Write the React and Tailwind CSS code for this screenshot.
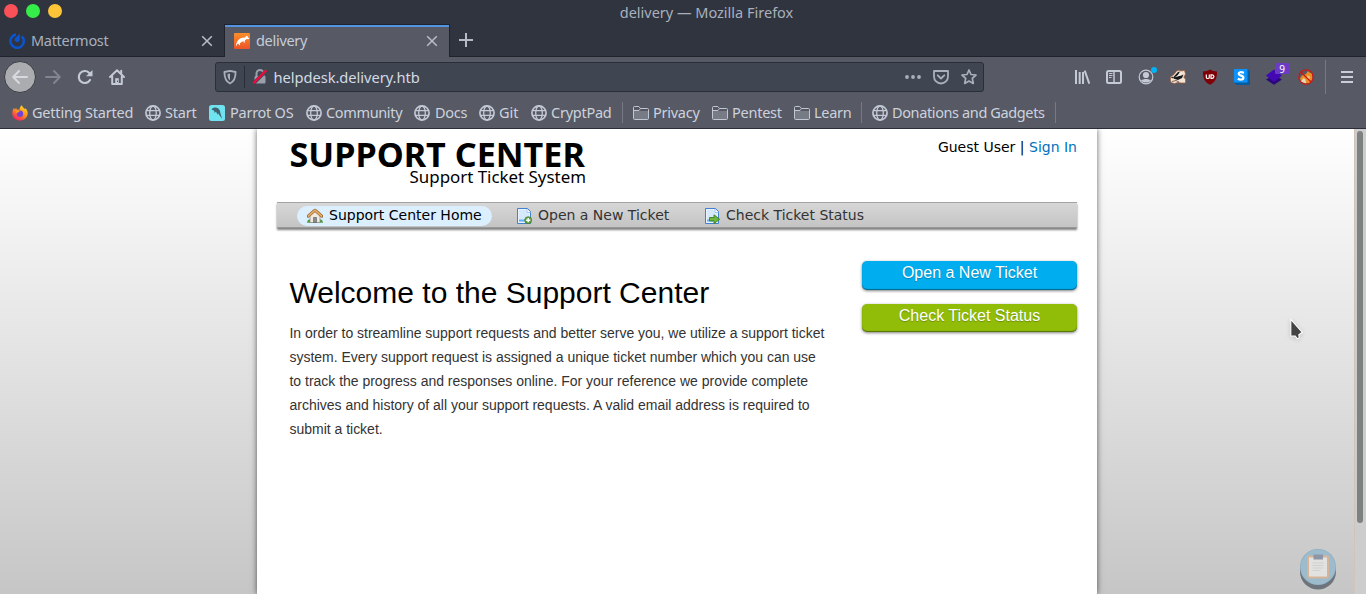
import React from "react";

const ui = "font-['Noto_Sans',sans-serif] whitespace-nowrap";

function Globe() {
  return (
    <svg width="16" height="16" viewBox="0 0 16 16" fill="none" stroke="#c3c9d5" className="shrink-0">
      <circle cx="8" cy="8" r="7.1" strokeWidth="1.7" />
      <ellipse cx="8" cy="8" rx="3.3" ry="7" strokeWidth="1.3" />
      <path d="M1.5 5.6h13M1.5 10.4h13" strokeWidth="1.3" />
    </svg>
  );
}

function Folder() {
  return (
    <svg width="16" height="16" viewBox="0 0 16 16" className="shrink-0">
      <path d="M.5 13.5v-11q0-1 1-1h4.3l1.7 2h7q1 0 1 1v9q0 1-1 1h-13q-1 0-1-1z" fill="#555762" stroke="#c0c6d2" />
      <path d="M1 6h14v8H1z" fill="#777b86" />
      <path d="M.5 5.5H6L7.5 3.5" stroke="#c0c6d2" fill="none" />
    </svg>
  );
}

function Firefox() {
  return (
    <svg width="16" height="16" viewBox="0 0 16 16" className="shrink-0">
      <defs>
        <linearGradient id="ff" x1=".8" y1="0" x2=".2" y2="1">
          <stop offset="0" stopColor="#ffe226" />
          <stop offset=".5" stopColor="#ff8a1c" />
          <stop offset="1" stopColor="#f5156c" />
        </linearGradient>
      </defs>
      <path d="M8 15.5C3.5 15.5.3 12.4.3 8.4.3 6 1.2 4 2 2.8l.6 1.6L4.2 3l.6 1.4 2.7.3C7.600 2.500 8.500 1 10 .2c.2 2 2 2.500 3 4l.6-1c1.400 1.500 2.100 3.300 2.100 5 0 4-3.300 7.300-7.700 7.300z" fill="url(#ff)" />
      <circle cx="8" cy="8.700" r="3.200" fill="#7541d6" />
      <path d="M3.500 6.500c1.600-1.200 3-.6 4.500.2-1.500 0-2 1-3.500 1.200z" fill="#ff9a1c" />
    </svg>
  );
}

function Parrot() {
  return (
    <svg width="16" height="16" viewBox="0 0 16 16" className="shrink-0">
      <rect width="16" height="16" rx="2.500" fill="#6fe3ef" />
      <path d="M2.500 4.500C4 2.500 7 2 9 3.300c2 1.300 2.200 3.500 2.500 5.400l1.700 5-2.600-3.200L9 8.200l-.5 1.600L7 6.600 5.500 8l-.3-2.300z" fill="#40616d" />
    </svg>
  );
}

const bookmarks = [
  { t: "Getting Started", w: "w-[133px]", i: <Firefox />, k: "tracking-[-0.2px]" },
  { t: "Start", w: "w-[64px]", i: <Globe />, k: "tracking-[-0.2px]" },
  { t: "Parrot OS", w: "w-[97px]", i: <Parrot />, g: "gap-[5px]", k: "tracking-[-0.25px]" },
  { t: "Community", w: "w-[108px]", i: <Globe />, k: "tracking-[-0.35px]" },
  { t: "Docs", w: "w-[65px]", i: <Globe />, g: "gap-[5px]", k: "tracking-[-0.25px]" },
  { t: "Git", w: "w-[52px]", i: <Globe />, k: "tracking-[0px]" },
  { t: "CryptPad", w: "w-[91px]", i: <Globe />, k: "tracking-[-0.25px]" },
  null,
  { t: "Privacy", w: "w-[79px]", i: <Folder />, k: "tracking-[-0.25px]" },
  { t: "Pentest", w: "w-[82px]", i: <Folder />, k: "tracking-[-0.25px]" },
  { t: "Learn", w: "w-[67px]", i: <Folder />, k: "tracking-[-0.3px]" },
  null,
  { t: "Donations and Gadgets", w: "w-[183px]", i: <Globe />, k: "tracking-[-0.38px]" },
  null,
];

function Close() {
  return (
    <svg width="12" height="12" viewBox="0 0 12 12" stroke="#b4bbc7" strokeWidth="1.600" className="shrink-0">
      <path d="M1.200 1.200l9.600 9.600M10.800 1.200l-9.600 9.600" />
    </svg>
  );
}

function TabStrip() {
  return (
    <div className="flex h-[33px] bg-[#2f343f]">
      <div className="flex h-[33px] w-[224px] items-center border-b border-[#20232b] pl-[9px] pr-[11px] pt-px">
        <svg width="16" height="16" viewBox="0 0 16 16" fill="none" className="shrink-0">
          <path d="M7 1.500A6.700 6.700 0 1 0 12.800 3.300" stroke="#0a55cf" strokeWidth="2.500" />
          <path d="M10.800.7v6.300a2.600 2.600 0 1 1-4.700-2z" fill="#0a55cf" />
        </svg>
        <span className={`${ui} ml-[6px] mt-px grow text-[14.5px] tracking-[-0.3px] text-[#a9b0bc]`}>Mattermost</span>
        <Close />
      </div>
      <div className="flex h-[33px] w-[226px] flex-col border-x border-[#20232b] bg-[#575965]">
        <div className="h-px bg-[#20232b]" />
        <div className="h-[2px] bg-[#5294e2]" />
        <div className="flex h-[28px] items-center pl-[9px] pr-[11px]">
          <svg width="16" height="16" viewBox="0 0 16 16" className="shrink-0">
            <defs>
              <linearGradient id="kg" x1="0" y1="0" x2="0" y2="1">
                <stop offset="0" stopColor="#fa8f2a" />
                <stop offset="1" stopColor="#ee5327" />
              </linearGradient>
            </defs>
            <rect width="16" height="16" rx="1" fill="url(#kg)" />
            <path d="M1.800 13.800C2 9.500 4.500 5.300 8.500 4.800l2.500-.3 1.300-1.700.9.600.9-.5v1.700l1.200 1-.8.600-1.800-.2-1.800 1.400-.4 2.600-.8-.4-.1-1.600-1.500.7-2.400 1.500.5 1.600-1 .5-1-1.700-.9.500z" fill="#fff" />
          </svg>
          <span className={`${ui} ml-[6px] grow text-[14.5px] tracking-[-0.3px] text-[#c6cdd8]`}>delivery</span>
          <Close />
        </div>
      </div>
      <div className="flex grow items-center border-b border-[#20232b] pl-[8px]">
        <svg width="16" height="16" viewBox="0 0 16 16" stroke="#b4bbc7" strokeWidth="2"><path d="M8 1v14M1 8h14" /></svg>
      </div>
    </div>
  );
}

function NavBar() {
  return (
    <div className="flex h-[40px] items-center bg-[#575965]">
      <div className="ml-[4px] flex size-[32px] shrink-0 items-center justify-center rounded-full border border-[#3b3d46] bg-[#abacaf]">
        <svg width="16" height="16" viewBox="0 0 16 16" fill="none" stroke="#d6dae0" strokeWidth="2" strokeLinecap="round" strokeLinejoin="round"><path d="M15 8H1.500M7 2L1.200 8 7 14" /></svg>
      </div>
      <svg className="ml-[9px] shrink-0" width="16" height="16" viewBox="0 0 16 16" fill="none" stroke="#82858f" strokeWidth="2" strokeLinecap="round" strokeLinejoin="round"><path d="M1 8h13.500M9 2l5.800 6L9 14" /></svg>
      <svg className="ml-[16px] shrink-0" width="16" height="16" viewBox="0 0 16 16" fill="none" stroke="#c3c9d5" strokeWidth="2.200"><path d="M13 11A6 6 0 1 1 12 3.700l1.500 1.500" strokeLinecap="round" /><path d="M15.500 1v6.300H9z" fill="#c3c9d5" stroke="none" /></svg>
      <svg className="ml-[16px] shrink-0" width="16" height="16" viewBox="0 0 16 16" fill="none" stroke="#c3c9d5" strokeWidth="2" strokeLinejoin="round" strokeLinecap="round"><path d="M1 8l7-6.800L15 8M3.200 7.500V15h9.600V7.500" /><path d="M6.200 15V9.200h3.600V15" fill="#c3c9d5" stroke="none" /><path d="M12.200 1.800v2.500" /><path d="M8.500 12v.6" stroke="#575965" strokeWidth="1" /></svg>
      <div className="ml-[90px] flex h-[30px] w-[769px] shrink-0 items-center rounded-[3px] border border-[#2b2e38] bg-[#404552]">
        <svg className="ml-[6px] shrink-0" width="16" height="16" viewBox="0 0 16 16" fill="none" stroke="#a9b0bc"><path d="M8 1.800l5.600 1.200c0 6-1 9.400-5.600 11.500C3.400 12.400 2.400 9 2.400 3z" strokeWidth="1.800" strokeLinejoin="round" /><path d="M8 4.500v7C6 9.800 5.500 7.800 5.500 5z" fill="#a9b0bc" stroke="none" /></svg>
        <div className="ml-[6px] h-[22px] w-px bg-[#2b2e38]" />
        <svg className="ml-[7px] shrink-0" width="16" height="16" viewBox="0 0 16 16"><path d="M4.500 7V4.500a3.500 3.500 0 0 1 7 0V7" fill="none" stroke="#9aa0ab" strokeWidth="2" /><rect x="2.500" y="7" width="11" height="7.500" rx="1" fill="#9aa0ab" /><path d="M1.500 14.500L14.500 1.500" stroke="#404552" strokeWidth="3.500" /><path d="M1.500 14.200L14.300 1.200" stroke="#f5083d" strokeWidth="2.200" /></svg>
        <span className={`${ui} ml-[5.500px] grow text-[14.7px] tracking-[-0.05px] text-[#d3dae3]`}>helpdesk.delivery.htb</span>
        <svg className="mr-[12px]" width="16" height="16" viewBox="0 0 16 16" fill="#a9b0bc"><circle cx="2" cy="8" r="1.900" /><circle cx="8" cy="8" r="1.900" /><circle cx="14" cy="8" r="1.900" /></svg>
        <svg className="mr-[12px]" width="16" height="16" viewBox="0 0 16 16" fill="none" stroke="#a9b0bc" strokeWidth="1.800" strokeLinecap="round" strokeLinejoin="round"><path d="M1 2h14v5.500a7 7 0 0 1-14 0z" /><path d="M4.700 6.300L8 9.500l3.300-3.200" /></svg>
        <svg className="mr-[6px]" width="16" height="16" viewBox="0 0 16 16" fill="none" stroke="#a9b0bc" strokeWidth="1.700" strokeLinejoin="round"><path d="M8 1l2 4.500 5 .5-3.700 3.400 1 5L8 12l-4.300 2.400 1-5L1 6l5-.5z" /></svg>
      </div>
      <svg className="ml-[90px] shrink-0" width="16" height="16" viewBox="0 0 16 16" stroke="#c3c9d5" strokeWidth="2"><path d="M2 1v14M5.700 3v12M9 3v12" /><path d="M10.700 1.700L15.300 14.700" /></svg>
      <svg className="ml-[16px] shrink-0" width="16" height="16" viewBox="0 0 16 16" fill="none" stroke="#c3c9d5"><rect x="1" y="2" width="14" height="12" rx="1.500" strokeWidth="2" /><path d="M8 2v12" strokeWidth="1.500" /><path d="M3 4.500h3.500M3 6.500h3.500M3 8.500h2.500" /></svg>
      <div className="relative ml-[16px] size-[16px] shrink-0">
        <svg width="16" height="16" viewBox="0 0 16 16" fill="none" stroke="#c3c9d5"><circle cx="8" cy="8" r="6.800" strokeWidth="1.200" /><circle cx="8" cy="6" r="3.100" fill="#c3c9d5" stroke="none" /><path d="M3 11.500c2.500-2 7.500-2 10 0-2.200 2.800-7.800 2.800-10 0z" fill="#c3c9d5" stroke="none" /></svg>
        <div className="absolute -right-[3px] -top-[2px] size-[6px] rounded-full bg-[#00b3f4]" />
      </div>
      <svg className="ml-[16px] shrink-0" width="16" height="16" viewBox="0 0 16 16"><path d="M.4 8L4 5.500 6.500 2 9 1.200l2 .8 3.500-.6 1 3.600-1.700 3.500 1.700 1.500v4L11.500 14l-4-.5-3 1-3.500-1-.6-2.500z" fill="#f1e4d5" stroke="#a65c35" strokeWidth=".7" /><path d="M3 8.500L8 3l2-.5L7 7.500l4.500-1 2-1-1.500 3.500L8 11 4 9.800z" fill="#171717" /><path d="M4.500 8.500l5-3.500 2.500-1.800L10 6.500z" fill="#f5ede5" /><path d="M.8 8.200l2.200-.5-.2 1.800z" fill="#171717" /><path d="M2 12.500l4-1 3 1.500" fill="none" stroke="#4a3020" strokeWidth=".7" /></svg>
      <svg className="ml-[16px] shrink-0" width="16" height="16" viewBox="0 0 16 16"><path d="M8 .6c2 1.300 4.500 1.800 7 1.900 0 7-1.500 10.500-7 13.300C2.500 13 1 9.500 1 2.500 3.500 2.400 6 1.900 8 .6z" fill="#800007" /><path d="M4.300 5.500v2.700q0 1.300 1.500 1.300t1.500-1.300V5.500" fill="none" stroke="#fff" strokeWidth="1.200" /><path d="M9 5.800h1.200q1.700.1 1.700 1.800t-1.700 1.800H9z" fill="none" stroke="#fff" strokeWidth="1.200" /></svg>
      <svg className="ml-[16px] shrink-0" width="16" height="16" viewBox="0 0 16 16"><path d="M0 0h13.500L16 2.500V16H2.500L0 13.500z" fill="#075c9f" /><path d="M0 0h13.500v13.500H0z" fill="#0b92fb" /><path d="M10 3.700Q5 2.300 4.700 4.700C4.700 7.300 9.600 6 9.400 8.800 9 11.300 5.500 10.600 3.800 9.700" fill="none" stroke="#fff" strokeWidth="2.200" /></svg>
      <div className="relative ml-[16px] size-[16px] shrink-0">
        <svg width="16" height="16" viewBox="0 0 16 16"><path d="M0 10.500L8 6l8 4.500-8 5.300z" fill="#2c0779" /><path d="M0 6.500l8-6 8 6-8 6.500z" fill="#4108b3" /></svg>
        <div className="absolute -top-[6px] left-[9px] flex h-[11px] w-[14px] items-center justify-center rounded-[1px] bg-[#6c3bc5] font-['Noto_Sans',sans-serif] text-[10px] leading-none text-white">9</div>
      </div>
      <svg className="ml-[16px] shrink-0" width="16" height="16" viewBox="0 0 16 16"><path d="M2 9.500l2-3 4-1.500 2-3 1.500 1.500 2.500 1 .5 4.500-2 5-5 .5-4.500-2z" fill="#e98f24" /><path d="M3 12.500l2.500-3.500 2 1.500.5 4z" fill="#e8d9bd" /><path d="M9 6.500l3 1-.5 3-2.500-1z" fill="#f6c479" /><circle cx="8" cy="8" r="7.200" fill="none" stroke="#cf1717" strokeWidth="1.200" /><path d="M2.800 3l10.400 10" stroke="#cf1717" strokeWidth="1.200" /></svg>
      <div className="ml-[11px] h-[34px] w-px bg-[#777a84]" />
      <svg className="ml-[13px] shrink-0" width="16" height="16" viewBox="0 0 16 16" stroke="#c9ced8" strokeWidth="2"><path d="M2 3h12M2 8h12M2 13h12" /></svg>
    </div>
  );
}

function Browser() {
  return (
    <header className="h-[129px] shrink-0 border-b border-[#2b2e38] bg-[#575965]">
      <div className="flex h-[24px] items-center bg-[#2f343f]">
        <div className="flex w-[70px] gap-[8px] pb-[2px] pl-[4px]">
          <div className="size-[14px] rounded-full bg-[#fa5057]" />
          <div className="size-[14px] rounded-full bg-[#35ed49]" />
          <div className="size-[14px] rounded-full bg-[#fdc537]" />
        </div>
        <div className={`${ui} grow pl-[10px] pr-[33px] text-center text-[14.5px] leading-[24px] text-[#a9b0bc]`}>delivery — Mozilla Firefox</div>
      </div>
      <TabStrip />
      <NavBar />
      <div className="flex h-[31px] items-center pl-[12px]">
        {bookmarks.map((b, k) =>
          b ? (
            <div key={k} className={`flex shrink-0 items-center ${b.w} ${b.g || "gap-[4px]"}`}>
              {b.i}
              <span className={`${ui} text-[14.5px] text-[#ccd3dd] ${b.k}`}>{b.t}</span>
            </div>
          ) : (
            <div key={k} className="mr-[10px] h-[21px] w-px shrink-0 bg-[#777a84]" />
          )
        )}
      </div>
    </header>
  );
}

function House() {
  return (
    <svg width="16" height="16" viewBox="0 0 16 16">
      <path d="M0 14.800q.5-4 3-3.300h10q2.500-.7 3 3.300z" fill="#4d9c43" />
      <path d="M3 8l5-5 5 5v6.500H3z" fill="#eeeae2" stroke="#8d8679" strokeWidth=".7" />
      <path d="M6.500 14.500V9.500h3v5z" fill="#898b8b" stroke="#5e6060" strokeWidth=".6" />
      <path d="M1.200 8.200L8 2.200l6.800 6" fill="none" stroke="#976127" strokeWidth="3" strokeLinecap="round" strokeLinejoin="round" />
      <path d="M1.400 8L8 2.100 14.600 8" fill="none" stroke="#e4aa66" strokeWidth="1.700" strokeLinecap="round" />
    </svg>
  );
}

function Page({ arrow }) {
  return (
    <svg width="16" height="16" viewBox="0 0 16 16">
      <path d="M1.500.5h10L14.500 3.500v12h-13z" fill="#bfdcfa" stroke="#4380ce" />
      <path d="M2.500 1.500h8.500v3.500h2.500v9.500h-11z" fill="#d6e8fc" stroke="#f2f8fe" strokeWidth=".8" />
      <path d="M11 1v3.500h3.500" fill="#fff" stroke="#8bb5e7" strokeWidth=".7" />
      <path d="M3 11.500h6v2H3z" fill="#62b3ef" />
      {arrow ? (
        <path d="M5.500 9.500h4.500V6.800l5.600 4.500-5.600 4.300v-2.700H5.500z" fill="#6fb63c" stroke="#3b7d1d" strokeWidth=".9" />
      ) : (
        <>
          <circle cx="12.200" cy="12.200" r="3.500" fill="#63a043" stroke="#3d7d27" strokeWidth=".7" />
          <path d="M12.200 10.100v4.200M10.100 12.200h4.200" stroke="#fff" strokeWidth="1.500" />
        </>
      )}
    </svg>
  );
}

function Site() {
  const nav = "flex h-[20px] items-center gap-[6px] whitespace-nowrap text-[14px]";
  const button = "rounded-[5px] shadow-[inset_0_-1px_1px_rgba(0,0,0,0.4),0_1px_3px_rgba(0,0,0,0.5)]";
  return (
    <div className="h-full w-[840px] shrink-0 bg-white px-[20px] font-['DejaVu_Sans',sans-serif] shadow-[0_0_6px_rgba(0,0,0,0.6)]">
      <div className="flex h-[73px] justify-between">
        <div className="ml-[12.500px] w-[297px] pt-[8px] text-right font-['Noto_Sans',sans-serif] text-black">
          <div className="whitespace-nowrap text-left text-[34.2px] font-bold leading-[34px]">SUPPORT CENTER</div>
          <div className="-mt-[5px] mr-[0.500px] whitespace-nowrap text-[16.9px] leading-[22px]">Support Ticket System</div>
        </div>
        <div className="pt-[8px] text-[14px] leading-[20px] text-black">Guest User | <span className="text-[#0072bc]">Sign In</span></div>
      </div>
      <div className="flex h-[26px] items-center border-t border-[#a3a3a3] bg-linear-to-b from-[#d7d7d7] to-[#c3c3c3] pl-[20px] text-[#333] shadow-[inset_0_-1px_0_#999,0_2px_2px_rgba(0,0,0,0.5)]">
        <div className={`${nav} w-[195px] rounded-full bg-[#dbefff] pl-[10px] text-black`}><House />Support Center Home</div>
        <div className={`${nav} ml-[24px] w-[164px]`}><Page />Open a New Ticket</div>
        <div className={`${nav} ml-[24px]`}><Page arrow />Check Ticket Status</div>
      </div>
      <div className="flex justify-between font-['Liberation_Sans',sans-serif]">
        <div className="ml-[12.500px] w-[550px] pt-[45px]">
          <h1 className="text-[30px] leading-[40px] text-black">Welcome to the Support Center</h1>
          <p className="mt-[8px] text-[14px] leading-[24px] tracking-[-0.015px] text-[#333]">
            In order to streamline support requests and better serve you, we utilize a support ticket<br />
            system. Every support request is assigned a unique ticket number which you can use<br />
            to track the progress and responses online. For your reference we provide complete<br />
            archives and history of all your support requests. A valid email address is required to<br />
            submit a ticket.
          </p>
        </div>
        <div className="flex w-[215px] flex-col gap-[14px] pt-[33px] text-center text-[16px] leading-[23px] text-white [text-shadow:0_1px_1px_rgba(0,0,0,0.25)]">
          <div className={`${button} h-[29px] bg-[#00aeef]`}>Open a New Ticket</div>
          <div className={`${button} h-[28px] bg-[#91bd09]`}>Check Ticket Status</div>
        </div>
      </div>
    </div>
  );
}

export default function App() {
  return (
    <div className="relative flex h-[594px] w-[1366px] flex-col overflow-hidden">
      <Browser />
      <main className="flex min-h-0 grow overflow-hidden bg-linear-to-b from-white to-[#c6c6c6]">
        <div className="flex min-w-0 grow pl-[257px]"><Site /></div>
        <div className="flex w-[12px] shrink-0 border-l border-[#cec4ba] bg-[#cdcdcd] pl-[2px] pt-[2px]">
          <div className="h-[392px] w-[6px] rounded-full bg-[#7d8180]" />
        </div>
      </main>
      <svg className="absolute left-[1287px] top-[317px] drop-shadow-sm" width="20" height="24" viewBox="0 0 20 24"><path d="M3.800 2.500v16.500h4.500l2 2.800 2-1-.5-3 3.500-2.500z" fill="#444" stroke="#fff" strokeWidth="1.100" /></svg>
      <svg className="absolute left-[1300px] top-[548px]" width="36" height="42" viewBox="0 0 36 42">
        <circle cx="18" cy="23.500" r="18" fill="#6d747b" />
        <circle cx="18" cy="19" r="18" fill="#8cabbc" />
        <circle cx="18" cy="19" r="17.500" fill="#9cbccd" />
        <rect x="8" y="8.500" width="20" height="21" rx="1" fill="#e2e2e0" stroke="#d7b397" strokeWidth="2" />
        <rect x="13.500" y="6.500" width="9.500" height="5" fill="#8c96a6" />
        <path d="M12.500 15h11M12.500 17.500h11M12.500 20h11M12.500 22.500h8" stroke="#d0d2c9" />
      </svg>
    </div>
  );
}
